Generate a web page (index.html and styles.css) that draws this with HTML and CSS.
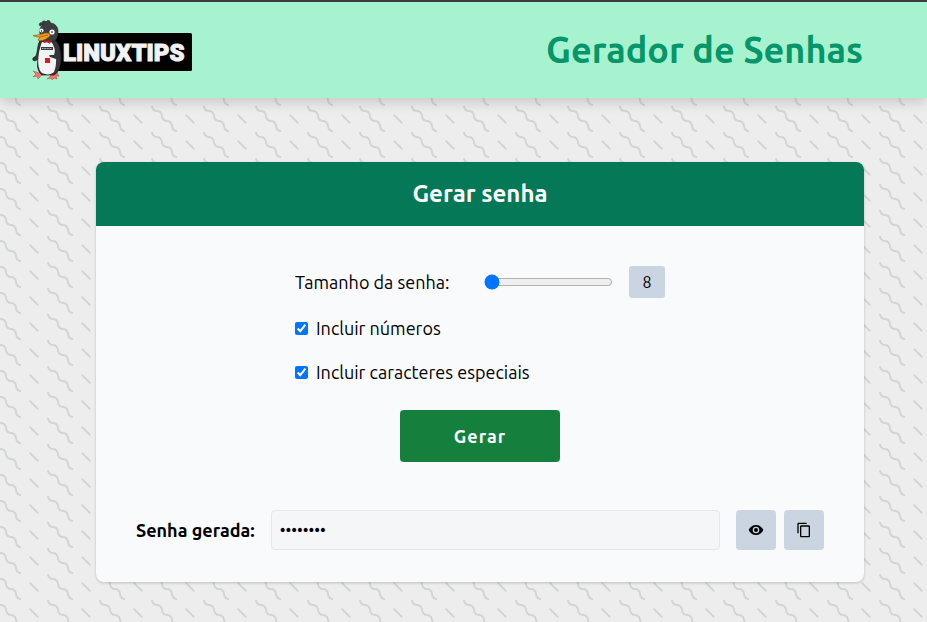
FILE: index.html
```html
<!DOCTYPE html>
<html lang="pt-BR">
<head>
<meta charset="utf-8">
<meta name="viewport" content="width=device-width, initial-scale=1">
<title>Gerador de Senhas</title>
<link rel="stylesheet" href="styles.css">
</head>
<body>
<header class="topbar">
  <svg class="logo" viewBox="0 0 160 60" role="img" aria-label="LINUXtips">
    <rect x="22" y="13" width="138" height="38" rx="1.5" fill="#000"/>
    <text class="logo-text" x="31" y="41">LINUXTIPS</text>
    <!-- feet -->
    <path d="M10 51 7 53 1 51 4 54 1 57 5 56 6 59 9 56 13 52ZM20 52 18 57 15 59 19 58 20 60 22 58 25 59 24 56 27 56 24 51Z" fill="#f5766a" stroke="#b8504b" stroke-width=".6"/>
    <!-- body and wing -->
    <path d="M8 20C5 26 6 31 4 36L1 38C0 41 3 42 6 39C5 45 5 51 10 55H22C30 51 30 36 28 30C27 23 24 20 19 18Z" fill="#35363a" stroke="#17181a" stroke-width=".7"/>
    <path d="M10 22C6 32 4 48 10 53C14 55 19 55 22 52C26 43 24 28 19 21Z" fill="#f3f3f3"/>
    <path d="M23 26C28 30 28 38 24 39L18 37C17 36 17 35 18 35L22 35C23 32 23 29 23 26Z" fill="#35363a"/>
    <!-- head -->
    <path d="M8 14C7 9 9 6 12 4L8 6C6 3 9 2 11 3C9 1 13 0 14 2C16-1 19 1 18 3C23 3 26 7 26 11C26 16 25 20 21 22H11Z" fill="#3b3d40" stroke="#1b1c1e" stroke-width=".6"/>
    <circle cx="9.500" cy="10.500" r="2" fill="#fff"/><circle cx="20" cy="12" r="2.600" fill="#fff"/>
    <circle cx="9.500" cy="11" r=".7"/><circle cx="20" cy="12" r=".8"/>
    <path d="M15 13C12 13 9 15 1 15.500C3 17 5 17 8 17L6 20C10 22 14 19 18 16C18 14 17 13 15 13Z" fill="#f5a11e" stroke="#96570c" stroke-width=".7"/>
    <path d="M8 17 16 15" stroke="#96570c" stroke-width=".8"/>
    <!-- bow tie, lettering strip and cup -->
    <path d="M12 20 15 21 19 20 18 24 15 22 12 23Z" fill="#b52323"/>
    <path d="M9 27H21V30H9Z" fill="#3c3c3c"/><path d="M10 28.500H20" stroke="#ddd" stroke-width=".8" stroke-dasharray="1 .6"/>
    <path d="M13 38 18 38 18 43 13 43Z" fill="#df1919"/>
  </svg>
  <h1 class="title">Gerador de Senhas</h1>
</header>
<main class="page">
  <section class="card">
    <h2 class="card-title">Gerar senha</h2>
    <div class="card-body">
      <form class="options">
        <div class="size-row">
          <label for="size">Tamanho da senha:</label>
          <input class="slider" id="size" type="range" min="8" max="32" value="8">
          <output class="size-value" for="size">8</output>
        </div>
        <div class="check-row">
          <input class="check" id="numbers" type="checkbox" checked>
          <label for="numbers">Incluir números</label>
        </div>
        <div class="check-row">
          <input class="check" id="special" type="checkbox" checked>
          <label for="special">Incluir caracteres especiais</label>
        </div>
        <button class="generate" type="button">Gerar</button>
      </form>
      <div class="result">
        <label class="result-label" for="password">Senha gerada:</label>
        <input class="password" id="password" type="password" value="abcd1234" readonly>
        <div class="actions">
          <button class="icon-button" type="button" aria-label="Mostrar senha">
            <svg class="icon" viewBox="0 0 24 24"><path d="M12 4.500C7 4.500 2.730 7.610 1 12c1.730 4.390 6 7.500 11 7.500s9.270-3.110 11-7.500c-1.730-4.390-6-7.500-11-7.500zM12 17a5 5 0 1 1 0-10 5 5 0 0 1 0 10zm0-8a3 3 0 1 0 0 6 3 3 0 0 0 0-6z"/></svg>
          </button>
          <button class="icon-button" type="button" aria-label="Copiar senha">
            <svg class="icon" viewBox="0 0 24 24"><path d="M16 1H4c-1.100 0-2 .9-2 2v14h2V3h12V1zm3 4H8c-1.100 0-2 .9-2 2v14c0 1.100.9 2 2 2h11c1.100 0 2-.9 2-2V7c0-1.100-.9-2-2-2zm0 16H8V7h11v14z"/></svg>
          </button>
        </div>
      </div>
    </div>
  </section>
</main>
</body>
</html>
```
FILE: styles.css
```css
* {
  box-sizing: border-box;
}

body {
  min-height: 100vh;
  margin: 0;
  border-top: 2px solid #3a3f3d;
  background: #ededed url("data:image/svg+xml,%3Csvg xmlns='http://www.w3.org/2000/svg' width='52' height='26'%3E%3Cpath fill='%23b5bdba' fill-opacity='.5' d='M10 10c0-2.210-1.790-4-4-4-3.314 0-6-2.686-6-6h2c0 2.210 1.790 4 4 4 3.314 0 6 2.686 6 6 0 2.210 1.790 4 4 4 3.314 0 6 2.686 6 6 0 2.210 1.790 4 4 4v2c-3.314 0-6-2.686-6-6 0-2.210-1.790-4-4-4-3.314 0-6-2.686-6-6zm25.464-1.950l8.486 8.486-1.414 1.414-8.486-8.486 1.414-1.414z'/%3E%3C/svg%3E") -5px 2px;
  color: #000;
  font-family: Ubuntu, "Noto Sans", sans-serif;
  font-size: 18px;
  line-height: 28px;
}

.topbar {
  display: flex;
  align-items: center;
  justify-content: space-between;
  height: 96px;
  padding: 0 64px 0 32px;
  background: #a7f3d0;
  box-shadow: 0 4px 12px rgba(0, 0, 0, .16);
}

.logo {
  width: 160px;
  height: 60px;
}

.logo-text {
  fill: #f2f2f2;
  stroke: #f2f2f2;
  stroke-width: 1px;
  font: 900 24px Roboto, "Liberation Sans", sans-serif;
}

.title {
  margin: 0;
  color: #059669;
  font-size: 36px;
  line-height: 40px;
}

.page {
  padding: 64px 63px 40px 96px;
}

.card {
  overflow: hidden;
  border-radius: 8px;
  background: #f8fafc;
  box-shadow: 0 1px 3px rgba(0, 0, 0, .2);
}

.card-title {
  margin: 0;
  padding: 16px;
  background: #047857;
  color: #fff;
  font-size: 24px;
  line-height: 32px;
  text-align: center;
}

.card-body {
  padding: 40px 40px 32px;
}

.options {
  display: flex;
  flex-direction: column;
  gap: 16px;
  width: 370px;
  max-width: 100%;
  margin: 0 auto;
}

.size-row {
  display: flex;
  align-items: center;
  justify-content: space-between;
  gap: 16px;
}

.slider {
  width: 129px;
  margin: 0 0 0 auto;
}

.size-value {
  min-width: 36px;
  border-radius: 3px;
  background: #cbd5e1;
  font-size: 16px;
  line-height: 32px;
  text-align: center;
}

.check-row {
  display: flex;
  align-items: center;
  gap: 8px;
}

.check {
  width: 13px;
  height: 13px;
  margin: 0;
}

.generate {
  align-self: center;
  width: 160px;
  margin-top: 8px;
  padding: 12px;
  border: 0;
  border-radius: 4px;
  background: #15803d;
  color: #fff;
  font: bold 18px/28px Ubuntu, "Noto Sans", sans-serif;
  letter-spacing: 1px;
}

.result {
  display: flex;
  align-items: center;
  gap: 16px;
  margin-top: 48px;
}

.result-label {
  font-weight: bold;
}

.password {
  flex: 1;
  min-width: 0;
  height: 40px;
  padding: 0 8px;
  border: 1px solid #e5e7eb;
  border-radius: 4px;
  background: #f5f6f8;
  color: #000;
  font: 16px/24px Ubuntu, "Noto Sans", sans-serif;
}

.actions {
  display: flex;
  gap: 8px;
}

.icon-button {
  display: grid;
  place-items: center;
  width: 40px;
  height: 40px;
  padding: 0;
  border: 0;
  border-radius: 4px;
  background: #cbd5e1;
}

.icon {
  width: 16px;
  height: 16px;
}
```
